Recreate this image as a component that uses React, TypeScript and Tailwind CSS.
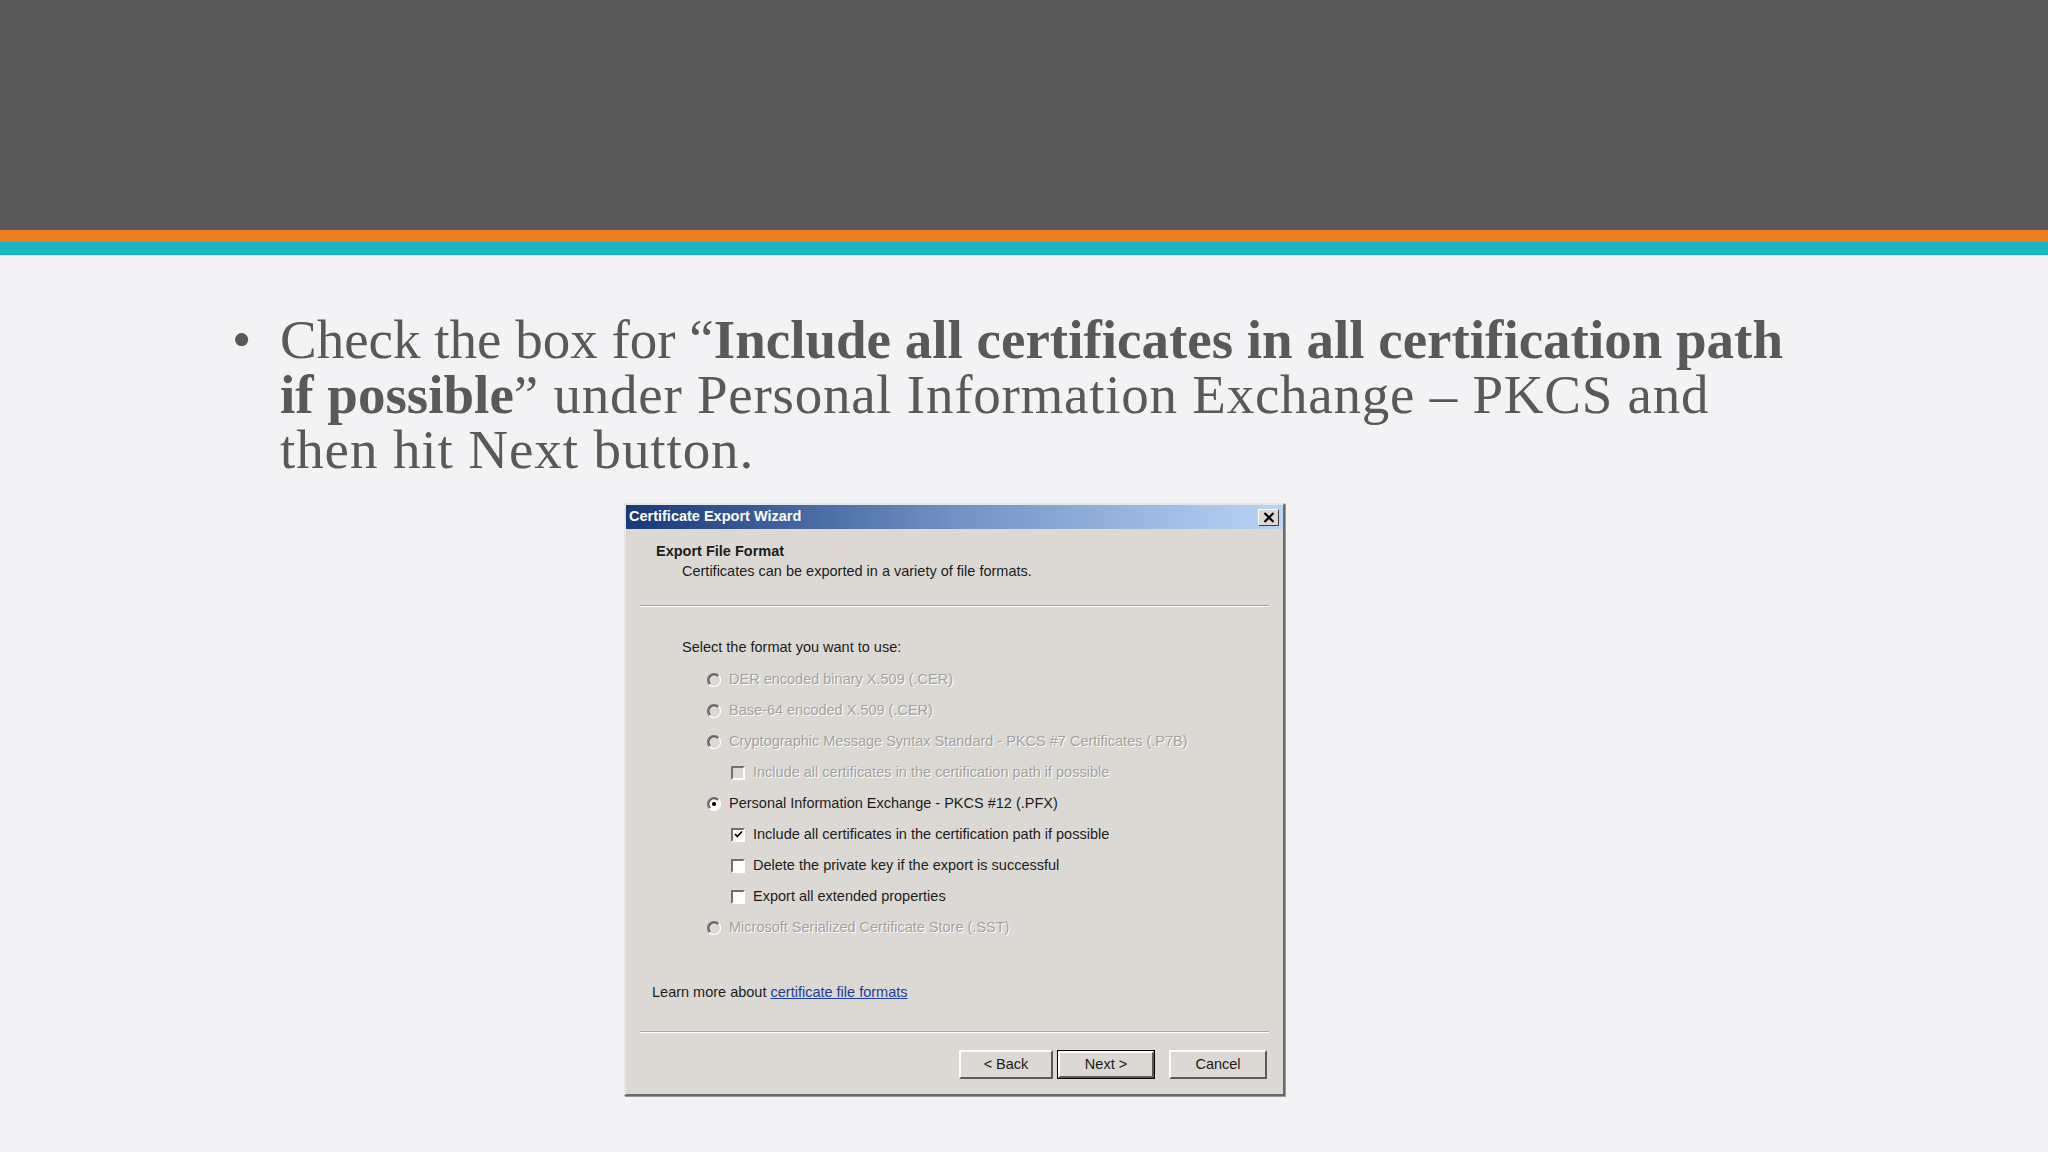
import React from "react";

const sans = { fontFamily: '"Liberation Sans", Arial, sans-serif' };

function Radio({ checked, disabled }: { checked?: boolean; disabled?: boolean }) {
  return (
    <svg width="14" height="14" viewBox="0 0 12 12" className="shrink-0">
      <circle cx="6" cy="6" r="5.5" fill={disabled ? "#dcd9d4" : "#ffffff"} />
      <path d="M10 2 A5.5 5.5 0 0 0 2 10" fill="none" stroke="#808080" strokeWidth="1" />
      <path d="M9.3 2.8 A4.5 4.5 0 0 0 2.8 9.3" fill="none" stroke="#404040" strokeWidth="1" />
      <path d="M2 10 A5.5 5.5 0 0 0 10 2" fill="none" stroke="#ffffff" strokeWidth="1" />
      {checked && <circle cx="6" cy="6" r="1.8" fill="#000" />}
    </svg>
  );
}

function Check({ checked, disabled }: { checked?: boolean; disabled?: boolean }) {
  return (
    <div
      className={`flex h-[14px] w-[14px] shrink-0 items-center justify-center border-[2px] border-t-[#707070] border-l-[#707070] border-b-white border-r-white ${
        disabled ? "bg-[#dcd9d4]" : "bg-white"
      }`}
    >
      {checked && (
        <svg width="9" height="9" viewBox="0 0 9 9">
          <path d="M1 4 L3.3 6.5 L8 1.5" fill="none" stroke="#000" strokeWidth="1.8" />
        </svg>
      )}
    </div>
  );
}

type Opt = { kind: "radio" | "check"; label: string; disabled?: boolean; checked?: boolean };

const options: Opt[] = [
  { kind: "radio", label: "DER encoded binary X.509 (.CER)", disabled: true },
  { kind: "radio", label: "Base-64 encoded X.509 (.CER)", disabled: true },
  { kind: "radio", label: "Cryptographic Message Syntax Standard - PKCS #7 Certificates (.P7B)", disabled: true },
  { kind: "check", label: "Include all certificates in the certification path if possible", disabled: true },
  { kind: "radio", label: "Personal Information Exchange - PKCS #12 (.PFX)", checked: true },
  { kind: "check", label: "Include all certificates in the certification path if possible", checked: true },
  { kind: "check", label: "Delete the private key if the export is successful" },
  { kind: "check", label: "Export all extended properties" },
  { kind: "radio", label: "Microsoft Serialized Certificate Store (.SST)", disabled: true },
];

function WinButton({ label, focused, width }: { label: string; focused?: boolean; width: string }) {
  return (
    <div className={`${width} h-[29px] ${focused ? "border border-black" : ""}`}>
      <div className="flex h-full w-full items-center justify-center border-[2px] border-t-white border-l-white border-b-[#5a5a5a] border-r-[#5a5a5a] bg-[#dcd9d4] text-[14.5px] text-[#1a1a1a]">
        {label}
      </div>
    </div>
  );
}

function Wizard() {
  return (
    <div
      className="ml-[624px] mt-[26px] w-[661px] border-[2px] border-t-[#e8e6e2] border-l-[#e8e6e2] border-b-[#6a6a6a] border-r-[#6a6a6a] bg-[#dcd9d4] shadow-[1px_1px_0_#9a9a9a]"
      style={sans}
    >
      {/* title bar */}
      <div className="flex h-[24px] items-center justify-between bg-gradient-to-r from-[#17387a] via-[#7292c6] to-[#b9d5f4] pl-[3px] pr-[4px]">
        <span className="text-[14.5px] font-bold text-white">Certificate Export Wizard</span>
        <div className="flex h-[17px] w-[21px] items-center justify-center border border-t-white border-l-white border-b-[#404040] border-r-[#404040] bg-[#dcd9d4]">
          <svg width="12" height="11" viewBox="0 0 12 11">
            <path d="M1.5 1 L10.5 10 M10.5 1 L1.5 10" stroke="#000" strokeWidth="2.2" />
          </svg>
        </div>
      </div>

      <div className="flex flex-col pt-[12px] text-[14.5px] text-[#1c1c1c]">
        <div className="h-[20px] pl-[30px] font-bold leading-[20px]">Export File Format</div>
        <div className="h-[20px] pl-[56px] leading-[20px]">Certificates can be exported in a variety of file formats.</div>

        <div className="mx-[14px] mt-[24px] h-[2px] border-t border-b border-t-[#a8a6a2] border-b-white" />

        <div className="mt-[30px] h-[20px] pl-[56px] leading-[20px]">Select the format you want to use:</div>

        <div className="mt-[7px] flex flex-col">
          {options.map((o, i) => (
            <div
              key={i}
              className={`flex h-[31px] items-center gap-[8px] ${o.kind === "radio" ? "pl-[81px]" : "pl-[105px]"}`}
            >
              {o.kind === "radio" ? (
                <Radio checked={o.checked} disabled={o.disabled} />
              ) : (
                <Check checked={o.checked} disabled={o.disabled} />
              )}
              <span
                className={
                  o.disabled
                    ? "text-[#a3a19d] [text-shadow:1px_1px_0_#ffffff]"
                    : "text-[#1c1c1c]"
                }
              >
                {o.label}
              </span>
            </div>
          ))}
        </div>

        <div className="mt-[39px] h-[20px] pl-[26px] leading-[20px]">
          Learn more about <span className="text-[#1f3a9e] underline">certificate file formats</span>
        </div>

        <div className="mx-[14px] mt-[29px] h-[2px] border-t border-b border-t-[#a8a6a2] border-b-white" />

        <div className="mt-[17px] mb-[15px] flex justify-end pr-[16px]">
          <WinButton label="< Back" width="w-[94px]" />
          <div className="w-[4px]" />
          <WinButton label="Next >" width="w-[98px]" focused />
          <div className="w-[14px]" />
          <WinButton label="Cancel" width="w-[98px]" />
        </div>
      </div>
    </div>
  );
}

export default function App() {
  return (
    <div className="h-[1152px] w-[2048px] overflow-hidden bg-[#f3f2f4]">
      <div className="h-[230px] bg-[#595959]" />
      <div className="h-[12px] bg-[#ed7d22]" />
      <div className="h-[13px] bg-[#1cb5c1]" />
      <div className="h-[1px] bg-[#b4ecef]" />

      <div
        className="mt-[56px] flex pl-[232px] text-[55px] leading-[55px] text-[#595959]"
        style={{ fontFamily: '"Liberation Serif", "Times New Roman", serif' }}
      >
        <span className="w-[48px] shrink-0">•</span>
        <div className="whitespace-nowrap">
          Check the box for “<b>Include all certificates in all certification path</b>
          <br />
          <b>if possible</b>
          <span className="tracking-[0.75px]">” under Personal Information Exchange – PKCS and</span>
          <br />
          <span className="tracking-[0.9px]">then hit Next button.</span>
        </div>
      </div>

      <Wizard />
    </div>
  );
}
